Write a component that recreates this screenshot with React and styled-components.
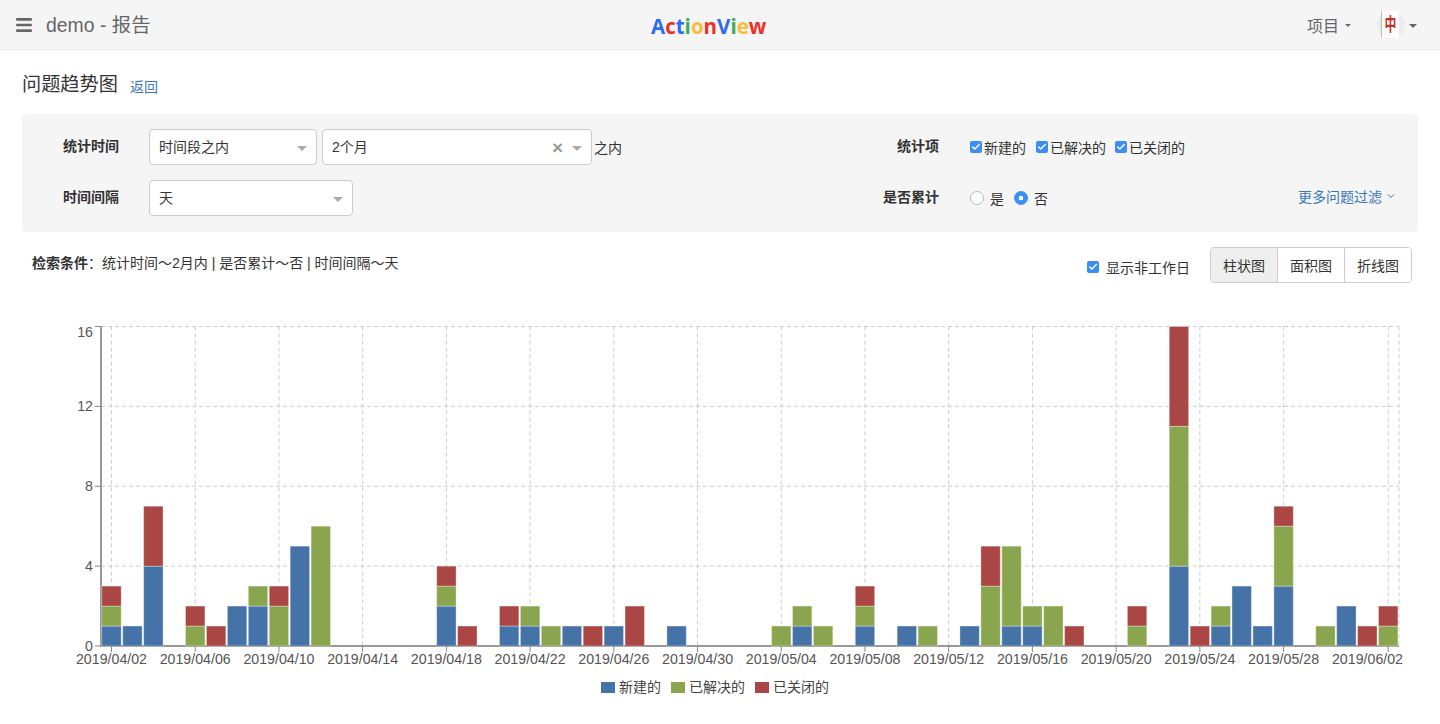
import React from 'react'
import styled, { createGlobalStyle } from 'styled-components'
import { FaBars } from 'react-icons/fa'
import { Check, ChevronDown } from 'lucide-react'

const GlobalStyle = createGlobalStyle`
  html, body { margin: 0; padding: 0; background: #fff; }
  body {
    font-family: "Liberation Sans", "Noto Sans CJK SC", sans-serif;
    font-size: 14px;
    color: #333;
  }
`

const Navbar = styled.nav`
  height: 49px;
  display: flex;
  align-items: center;
  background: #f5f5f5;
  border-bottom: 1px solid #e7e7e7;
`
const NavLeft = styled.div`
  flex: 0 0 651px;
  display: flex;
  align-items: center;
  gap: 15px;
  padding-left: 15px;
  box-sizing: border-box;
  color: #666;
  font-size: 19.4px;
`
const MenuIcon = styled(FaBars)`
  margin-right: -2px;
`
const NavTitle = styled.span`
  margin-top: -3px;
`
const Logo = styled.div`
  font-family: "Open Sans", sans-serif;
  font-weight: 700;
  font-size: 20.5px;
  padding-top: 2px;
`
const LogoLetter = styled.span`
  color: ${(p) => p.$color};
`
const NavRight = styled.div`
  margin-left: auto;
  display: flex;
  align-items: center;
  color: #666;
  font-size: 16px;
  padding-right: 23px;
`
const Caret = styled.span`
  display: inline-block;
  width: 0;
  height: 0;
  margin-left: ${(p) => p.$gap ?? 6}px;
  margin-top: 2px;
  border-left: ${(p) => p.$size || 3.5}px solid transparent;
  border-right: ${(p) => p.$size || 3.5}px solid transparent;
  border-top: ${(p) => p.$size || 3.5}px solid ${(p) => p.$color || '#666'};
`
const Avatar = styled.svg`
  width: 28px;
  height: 28px;
  margin-left: 26px;
  overflow: visible;
`
const Main = styled.main`
  padding: 0 22px;
`
const TitleRow = styled.div`
  display: flex;
  align-items: center;
  gap: 12px;
  height: 64px;
  padding-top: 7px;
  padding-bottom: 1px;
  box-sizing: border-box;
`
const Title = styled.h2`
  margin: 0;
  font-size: 19.2px;
  font-weight: 400;
  line-height: 28px;
`
const LinkText = styled.a`
  color: #3a78b8;
  font-size: 14px;
  display: inline-flex;
  align-items: center;
  gap: 3px;
`
const BackLink = styled(LinkText)`
  margin-top: 2px;
`
const FilterPanel = styled.section`
  display: grid;
  grid-template-columns: 97px 630px 130px 1fr;
  column-gap: 30px;
  row-gap: 15px;
  padding: 15px 21px 16px 0;
  background: #f5f5f5;
  border-radius: 4px;
`
const FieldLabel = styled.label`
  font-weight: 700;
  text-align: right;
  line-height: 35px;
  color: #333;
`
const Controls = styled.div`
  display: flex;
  align-items: center;
  gap: ${(p) => p.$gap ?? 5}px;
  padding-left: ${(p) => p.$pad || 0}px;
  min-height: 36px;
`
const Select = styled.div`
  width: ${(p) => p.$width}px;
  height: 36px;
  box-sizing: border-box;
  display: flex;
  align-items: center;
  padding: 0 9px;
  background: #fff;
  border: 1px solid #ccc;
  border-radius: 4px;
  color: #333;
`
const SelectValue = styled.span`
  flex: 1;
  margin-top: -3px;
`
const Clear = styled.span`
  color: #999;
  font-size: 19px;
  font-weight: 700;
  line-height: 1;
  margin-right: 9px;
`
const Suffix = styled.span`
  margin-left: -3px;
  margin-top: -1px;
`
const CheckItem = styled.span`
  display: inline-flex;
  align-items: center;
  gap: 2px;
  margin-right: ${(p) => p.$mr || 0}px;
`
const CheckBox = styled.span`
  width: 12px;
  height: 12px;
  flex: none;
  display: inline-flex;
  align-items: center;
  justify-content: center;
  border-radius: 2px;
  background: #3b8ff3;
  color: #fff;
`
const RadioItem = styled.span`
  display: inline-flex;
  align-items: center;
  gap: 6px;
  margin-right: 10px;
  margin-top: -1px;
`
const Radio = styled.span`
  width: 14px;
  height: 14px;
  flex: none;
  box-sizing: border-box;
  border-radius: 50%;
  background: ${(p) => (p.$on ? 'radial-gradient(circle, #fff 0 2px, #3b8ff3 2.6px)' : '#fff')};
  border: 1px solid ${(p) => (p.$on ? '#3b8ff3' : '#bbb')};
`
const MoreLink = styled(LinkText)`
  margin-left: auto;
  margin-bottom: 4px;
`
const Toolbar = styled.div`
  display: flex;
  justify-content: space-between;
  align-items: flex-start;
  margin-top: 15px;
  padding: 0 6px 0 10px;
`
const Conditions = styled.div`
  line-height: 18px;
  padding-top: 7px;
`
const ViewTools = styled.div`
  display: flex;
  align-items: center;
  gap: 20px;
`
const NonWorkday = styled(CheckItem)`
  gap: 7px;
  padding-top: 4px;
`
const ButtonGroup = styled.div`
  display: flex;
  height: 36px;
  box-sizing: border-box;
  border: 1px solid #ccc;
  border-radius: 4px;
  overflow: hidden;
`
const GroupButton = styled.button`
  width: ${(p) => (p.$first ? 66 : 67)}px;
  padding: 0;
  border: 0;
  border-left: ${(p) => (p.$first ? '0' : '1px solid #ccc')};
  background: ${(p) => (p.$active ? '#eee' : '#fff')};
  color: #333;
  font: inherit;
`
const ChartSvg = styled.svg`
  display: block;
  margin-top: 17px;
`
const TickText = styled.text`
  font-size: 14.2px;
  fill: #555;
`
const Legend = styled.div`
  display: flex;
  justify-content: center;
  gap: 10px;
  margin-top: 4px;
  padding-right: 10px;
  line-height: 16px;
  color: #444;
`
const LegendItem = styled.span`
  display: inline-flex;
  align-items: center;
  gap: 4px;
`
const Swatch = styled.span`
  width: 14px;
  height: 11px;
  background: ${(p) => p.$color};
`

const LOGO = [
  ['A', '#2a6df4'], ['c', '#ee3024'], ['t', '#2a6df4'], ['i', '#46a85a'], ['o', '#fbbc3c'],
  ['n', '#ee3024'], ['V', '#2a6df4'], ['i', '#46a85a'], ['e', '#fbbc3c'], ['w', '#ee3024'],
]

const BLUE = '#4572a7'
const GREEN = '#89a54e'
const RED = '#aa4643'

// day index -> [new, resolved, closed]
const DATA = {
  0: [1, 1, 1], 1: [1, 0, 0], 2: [4, 0, 3], 4: [0, 1, 1], 5: [0, 0, 1], 6: [2, 0, 0], 7: [2, 1, 0],
  8: [0, 2, 1], 9: [5, 0, 0], 10: [0, 6, 0], 16: [2, 1, 1], 17: [0, 0, 1], 19: [1, 0, 1], 20: [1, 1, 0],
  21: [0, 1, 0], 22: [1, 0, 0], 23: [0, 0, 1], 24: [1, 0, 0], 25: [0, 0, 2], 27: [1, 0, 0], 32: [0, 1, 0],
  33: [1, 1, 0], 34: [0, 1, 0], 36: [1, 1, 1], 38: [1, 0, 0], 39: [0, 1, 0], 41: [1, 0, 0], 42: [0, 3, 2],
  43: [1, 4, 0], 44: [1, 1, 0], 45: [0, 2, 0], 46: [0, 0, 1], 49: [0, 1, 1], 51: [4, 7, 5], 52: [0, 0, 1],
  53: [1, 1, 0], 54: [3, 0, 0], 55: [1, 0, 0], 56: [3, 3, 1], 58: [0, 1, 0], 59: [2, 0, 0], 60: [0, 0, 1],
  61: [0, 1, 1],
}

const X_TICKS = [
  [0, '2019/04/02'], [4, '2019/04/06'], [8, '2019/04/10'], [12, '2019/04/14'], [16, '2019/04/18'],
  [20, '2019/04/22'], [24, '2019/04/26'], [28, '2019/04/30'], [32, '2019/05/04'], [36, '2019/05/08'],
  [40, '2019/05/12'], [44, '2019/05/16'], [48, '2019/05/20'], [52, '2019/05/24'], [56, '2019/05/28'],
  [61, '2019/06/02'],
]

const LEFT = 101
const RIGHT = 1399
const ZERO = 646
const UNIT = 19.97
const xOf = (i) => 111.5 + i * 20.93
const yOf = (v) => ZERO - v * UNIT

const Chart = () => (
  <ChartSvg width="1396" height="375" viewBox="22 300 1396 375">
    {[4, 8, 12, 16].map((v) => (
      <line key={v} x1={LEFT} x2={RIGHT} y1={yOf(v)} y2={yOf(v)} stroke="#ccc" strokeDasharray="4 3" />
    ))}
    {X_TICKS.map(([i]) => (
      <line key={i} x1={xOf(i)} x2={xOf(i)} y1={yOf(16)} y2={ZERO} stroke="#ccc" strokeDasharray="4 3" />
    ))}
    <line x1={RIGHT} x2={RIGHT} y1={yOf(16)} y2={ZERO} stroke="#ccc" strokeDasharray="4 3" />
    <line x1={LEFT} x2={LEFT} y1={yOf(16)} y2={ZERO + 1} stroke="#999" strokeWidth="2" />
    <line x1={LEFT} x2={RIGHT} y1={ZERO} y2={ZERO} stroke="#999" strokeWidth="2" />
    {Object.entries(DATA).map(([i, [a, b, c]]) => {
      const x = xOf(Number(i)) - 9.7
      return (
        <g key={i} stroke="#fff" strokeOpacity="0.35">
          {a > 0 && <rect x={x} y={yOf(a)} width="19.4" height={a * UNIT} fill={BLUE} />}
          {b > 0 && <rect x={x} y={yOf(a + b)} width="19.4" height={b * UNIT} fill={GREEN} />}
          {c > 0 && <rect x={x} y={yOf(a + b + c)} width="19.4" height={c * UNIT} fill={RED} />}
        </g>
      )
    })}
    {[0, 4, 8, 12, 16].map((v) => (
      <g key={v}>
        <line x1={LEFT - 6} x2={LEFT} y1={yOf(v)} y2={yOf(v)} stroke="#888" />
        <TickText x={LEFT - 8} y={v === 16 ? 337 : yOf(v) + 5} textAnchor="end">{v}</TickText>
      </g>
    ))}
    {X_TICKS.map(([i, label]) => (
      <g key={label}>
        <line x1={xOf(i)} x2={xOf(i)} y1={ZERO} y2={ZERO + 6} stroke="#888" />
        {i === 61
          ? <TickText x={1403} y={664} textAnchor="end">{label}</TickText>
          : <TickText x={xOf(i)} y={664} textAnchor="middle">{label}</TickText>}
      </g>
    ))}
  </ChartSvg>
)

const CheckOption = ({ label, mr }) => (
  <CheckItem $mr={mr}>
    <CheckBox><Check size={10} strokeWidth={3.5} /></CheckBox>
    {label}
  </CheckItem>
)

const App = () => (
  <>
    <GlobalStyle />
    <Navbar>
      <NavLeft>
        <MenuIcon size={18} />
        <NavTitle>demo - 报告</NavTitle>
      </NavLeft>
      <Logo>
        {LOGO.map(([ch, color], i) => (
          <LogoLetter key={i} $color={color}>{ch}</LogoLetter>
        ))}
      </Logo>
      <NavRight>
        项目<Caret />
        <Avatar viewBox="0 0 28 28">
          <circle cx="14" cy="14" r="14" fill="#ececec" />
          <rect x="4" y="0" width="18" height="27" fill="#fff" />
          <line x1="4.5" y1="0" x2="4.5" y2="27" stroke="#bbb" />
          <text transform="translate(13.5 20) scale(0.85 1.3)" textAnchor="middle" fontSize="14" fontWeight="700" fontFamily="Noto Sans CJK SC" fill="#c9302c">中</text>
        </Avatar>
        <Caret $gap={4} $size={4} />
      </NavRight>
    </Navbar>
    <Main>
      <TitleRow>
        <Title>问题趋势图</Title>
        <BackLink>返回</BackLink>
      </TitleRow>
      <FilterPanel>
        <FieldLabel>统计时间</FieldLabel>
        <Controls>
          <Select $width={168}>
            <SelectValue>时间段之内</SelectValue>
            <Caret $color="#aaa" $size={5} />
          </Select>
          <Select $width={270}>
            <SelectValue>2个月</SelectValue>
            <Clear>×</Clear>
            <Caret $color="#aaa" $size={5} $gap={0} />
          </Select>
          <Suffix>之内</Suffix>
        </Controls>
        <FieldLabel>统计项</FieldLabel>
        <Controls $gap={0} $pad={1}>
          <CheckOption label="新建的" mr={10} />
          <CheckOption label="已解决的" mr={9} />
          <CheckOption label="已关闭的" />
        </Controls>
        <FieldLabel>时间间隔</FieldLabel>
        <Controls>
          <Select $width={204}>
            <SelectValue>天</SelectValue>
            <Caret $color="#aaa" $size={5} />
          </Select>
        </Controls>
        <FieldLabel>是否累计</FieldLabel>
        <Controls $gap={0} $pad={1}>
          <RadioItem><Radio />是</RadioItem>
          <RadioItem><Radio $on />否</RadioItem>
          <MoreLink>更多问题过滤<ChevronDown size={12} /></MoreLink>
        </Controls>
      </FilterPanel>
      <Toolbar>
        <Conditions>
          <strong>检索条件</strong>：统计时间～2月内 | 是否累计～否 | 时间间隔～天
        </Conditions>
        <ViewTools>
          <NonWorkday>
            <CheckBox><Check size={10} strokeWidth={3.5} /></CheckBox>
            显示非工作日
          </NonWorkday>
          <ButtonGroup>
            <GroupButton $first $active>柱状图</GroupButton>
            <GroupButton>面积图</GroupButton>
            <GroupButton>折线图</GroupButton>
          </ButtonGroup>
        </ViewTools>
      </Toolbar>
      <Chart />
      <Legend>
        <LegendItem><Swatch $color={BLUE} />新建的</LegendItem>
        <LegendItem><Swatch $color={GREEN} />已解决的</LegendItem>
        <LegendItem><Swatch $color={RED} />已关闭的</LegendItem>
      </Legend>
    </Main>
  </>
)

export default App
